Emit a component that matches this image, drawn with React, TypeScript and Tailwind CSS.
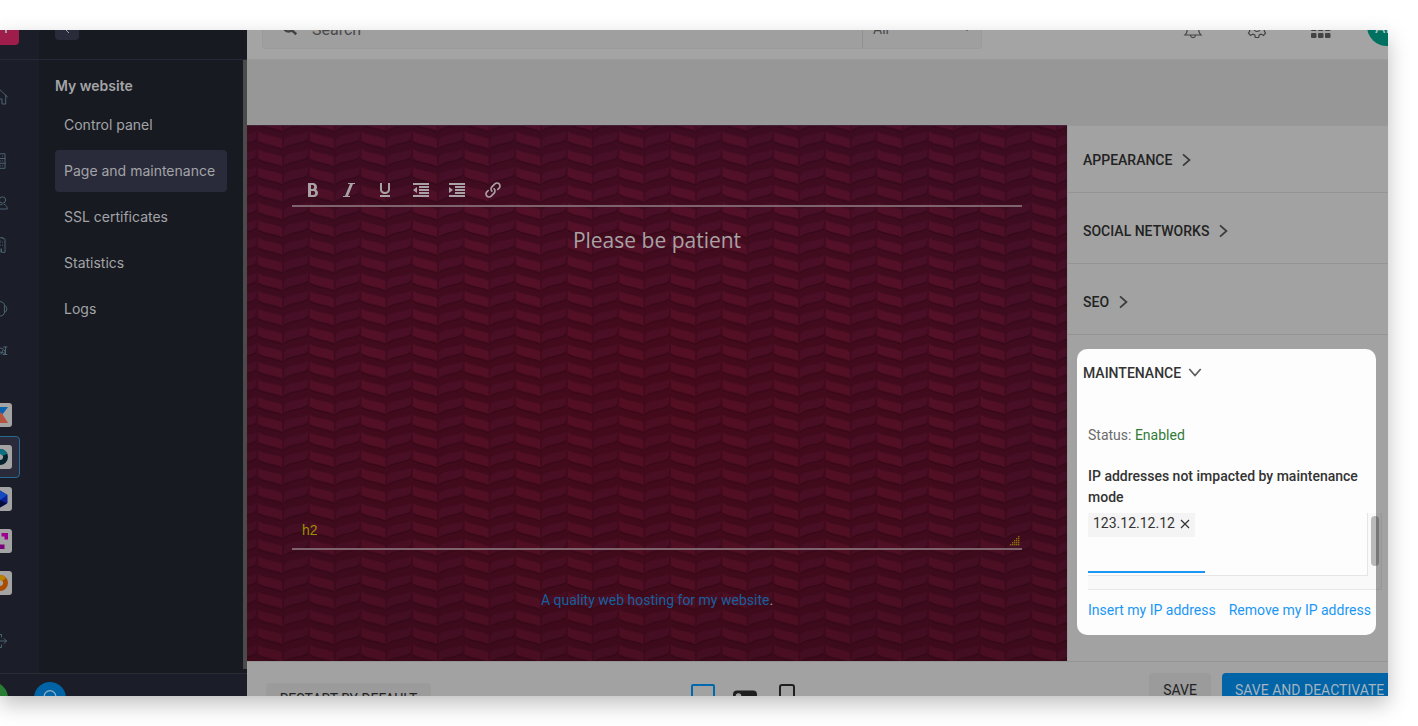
import React, { useState } from "react";
import { clsx } from "clsx";
import {
  ImBold,
  ImIndentDecrease,
  ImIndentIncrease,
  ImItalic,
  ImLink,
  ImUnderline,
} from "react-icons/im";

interface RailItem {
  name: string;
  icon: React.ReactNode;
  active?: boolean;
}

const Line: React.FC<{ children: React.ReactNode }> = ({ children }) => (
  <svg
    viewBox="0 0 16 16"
    className="size-4"
    fill="none"
    stroke="currentColor"
    strokeLinecap="round"
    strokeLinejoin="round"
  >
    {children}
  </svg>
);

const Logo: React.FC<{ children: React.ReactNode }> = ({ children }) => (
  <svg viewBox="0 0 24 24" className="size-6">
    <rect width="24" height="24" rx="3" fill="#a3a3a3" />
    {children}
  </svg>
);

const railGroups: RailItem[][] = [
  [
    {
      name: "Home",
      icon: (
        <Line>
          <path d="M.5 8 8 .8 15.500 8M2.800 6v9h3.700v-5h3.500v5h3.700V6" />
        </Line>
      ),
    },
  ],
  [
    {
      name: "Hosting",
      icon: (
        <Line>
          <path d="M3 .8h10v14.500H3zM3 5.500h10M3 10.300h10M10.500 3.200h.2M10.500 8h.2M10.500 12.800h.2M8.500 8h.2M8.500 12.800h.2" />
        </Line>
      ),
    },
    {
      name: "Users",
      icon: (
        <Line>
          <circle cx="10.500" cy="5" r="3.200" />
          <path d="M5.500 14c0-3 2-4.500 4.500-4.500M8 14h7.300c0-2.500-1.300-4-3.300-4.800" />
          <circle cx="3.500" cy="6" r="2.500" />
        </Line>
      ),
    },
    {
      name: "Company",
      icon: (
        <Line>
          <path d="M2 3.500h6M10 .8l3 1.500v13H9.500V12M8 .8h3M10.500 5v.2M10.500 8v.2M8.300 5v.2M8.300 8v.2M2 3.500v12h6V12" />
        </Line>
      ),
    },
  ],
  [
    {
      name: "Support",
      icon: (
        <Line>
          <path d="M2 5C3 2 5.500.6 8 .6S12.500 2 12.800 5M12.800 4.500c2.700.6 2.700 6.200 0 6.800zM3.200 4.500C.5 5.100.5 10.700 3.200 11.300zM12.500 11.500c-.5 2.500-2 3.500-4 3.500" />
        </Line>
      ),
    },
    {
      name: "Discover",
      icon: (
        <Line>
          <path d="M1 3.500 6 9M8 5c3 0 5 2 5.500 5.500L8 9M9 11l2-4M11.500 4H15M13.500 4v7.500M11 11.500h4" />
        </Line>
      ),
    },
  ],
  [
    {
      name: "kSuite",
      icon: (
        <Logo>
          <path d="M4 4h16l-6 8z" fill="#0b62ae" />
          <path d="M4 20 13 9l7 11z" fill="#b6553f" />
        </Logo>
      ),
    },
    {
      name: "Web hosting",
      active: true,
      icon: (
        <Logo>
          <circle cx="12" cy="12" r="5.500" fill="none" stroke="#06222d" strokeWidth="5" />
          <path d="M12 6.500a5.500 5.500 0 0 1 5 3.200" fill="none" stroke="#0b7180" strokeWidth="5" />
          <path d="m10 9 5.500 3-5.500 3z" fill="#a3a3a3" />
        </Logo>
      ),
    },
    {
      name: "Cloud",
      icon: (
        <Logo>
          <path d="M12 3.500 19.500 8v8L12 20.500 4.500 16V8z" fill="#0a2094" />
          <path d="M12 3.500 19.500 8l-7.500 5z" fill="#1549c0" />
          <path d="m12 13 7 3.500-7 4z" fill="#050b3b" />
        </Logo>
      ),
    },
    {
      name: "Streaming",
      icon: (
        <Logo>
          <path d="M13.500 4H20v6.500h-3.500v-3h-3zM4 4h6v3H7v3H4z" fill="#9b0093" />
          <path d="M8 15.500h8.500V20H8z" fill="#7c007e" />
        </Logo>
      ),
    },
    {
      name: "Events",
      icon: (
        <Logo>
          <circle cx="12" cy="12" r="5.500" fill="none" stroke="#a94d00" strokeWidth="5" />
          <path d="M12 6.500a5.500 5.500 0 0 1 4 2" fill="none" stroke="#b98300" strokeWidth="5" />
          <path d="m10 9 5.500 3-5.500 3z" fill="#a3a3a3" />
        </Logo>
      ),
    },
  ],
];

const menu = ["Control panel", "Page and maintenance", "SSL certificates", "Statistics", "Logs"];

const tools = [
  { name: "Bold", Icon: ImBold },
  { name: "Italic", Icon: ImItalic },
  { name: "Underline", Icon: ImUnderline },
  { name: "Decrease indent", Icon: ImIndentDecrease },
  { name: "Increase indent", Icon: ImIndentIncrease },
  { name: "Link", Icon: ImLink },
];

const Chevron: React.FC<{ open?: boolean }> = ({ open }) => (
  <svg
    viewBox="0 0 14 14"
    className={clsx("size-3.5 opacity-80", open && "rotate-90")}
    fill="none"
    stroke="currentColor"
    strokeWidth="1.700"
  >
    <path d="m3 1.300 6.500 5.700L3 12.700" />
  </svg>
);

const Rail: React.FC = () => (
  <div className="flex w-[39px] shrink-0 justify-end overflow-hidden bg-[#1b1d28]">
    <nav className="flex w-[78px] shrink-0 flex-col items-center gap-[22px] pt-4 text-[#4c6370]">
      {railGroups.map((group, i) => (
        <ul key={i}>
          {group.map((item) => (
            <li key={item.name}>
              <button
                aria-label={item.name}
                className={clsx(
                  "flex h-[42px] w-10 items-center justify-center",
                  item.active && "rounded border border-[#266a94] bg-[#292b3a]"
                )}
              >
                {item.icon}
              </button>
            </li>
          ))}
        </ul>
      ))}
      <button aria-label="Log out" className="-mt-1.5 flex h-[42px] w-10 items-center justify-center">
        <Line>
          <path d="M9.500 4V1.500h-8v13h8V12M5 8h9.500M12 5.500 14.500 8 12 10.500" />
        </Line>
      </button>
    </nav>
  </div>
);

const Sidebar: React.FC = () => {
  const [selected, setSelected] = useState<string>("Page and maintenance");

  return (
    <aside className="flex w-[247px] shrink-0 flex-col bg-[#171a21] font-['Inter','Liberation_Sans',sans-serif] text-[#a3a4a7]">
      <div className="flex h-[30px] items-end overflow-hidden border-b border-[#252938]">
        <div className="flex h-full w-[39px] shrink-0 items-start bg-[#1b1d28]">
          <span className="flex h-[15px] w-[19px] items-end justify-center rounded-br bg-[#9e1d4b]">
            <span className="mr-2 mb-3 h-1 w-0.5 bg-[#a3a4a7]" />
          </span>
        </div>
        <button
          aria-label="Back"
          className="mb-[19px] ml-4 flex h-6 w-6 shrink-0 items-center justify-center rounded bg-[#292b3a]"
        >
          <svg viewBox="0 0 12 12" className="size-3" fill="none" stroke="currentColor">
            <path d="M8 1 3 6l5 5" />
          </svg>
        </button>
      </div>
      <div className="flex flex-1">
        <Rail />
        <div className="flex-1 px-4 pt-4">
          <h2 className="text-sm font-semibold">My website</h2>
          <ul className="mt-2 space-y-1">
            {menu.map((item) => (
              <li key={item}>
                <button
                  onClick={() => setSelected(item)}
                  className={clsx(
                    "h-[42px] w-full rounded px-[9px] text-left text-sm",
                    item === selected && "bg-[#292b3a]"
                  )}
                >
                  {item}
                </button>
              </li>
            ))}
          </ul>
        </div>
        <div className="mb-1 w-1 bg-[#4b4b4b]" />
      </div>
      <div className="flex h-[23px] items-start gap-[26px] overflow-hidden border-t border-[#2a2b33] bg-[#1b1d28] pt-2">
        <span className="-ml-6 size-8 shrink-0 rounded-full bg-[#287c33]" />
        <button
          aria-label="Search"
          className="flex size-8 shrink-0 justify-center rounded-full bg-[#0063a6] pt-2"
        >
          <svg viewBox="0 0 16 16" className="size-4" fill="none" stroke="#8eafc6" strokeWidth="1.300">
            <circle cx="8" cy="6.500" r="5.800" />
          </svg>
        </button>
      </div>
    </aside>
  );
};

const Header: React.FC = () => (
  <header className="flex h-[30px] items-end overflow-hidden border-b border-[#9b9b9b] bg-[#a4a4a4] pl-[15px] text-[#434343]">
    <div className="mb-2.5 flex h-10 w-[720px] shrink items-center rounded border border-[#9a9a9a] bg-[#9f9f9f]">
      <svg viewBox="0 0 16 16" className="ml-[19px] size-4 shrink-0" fill="none" stroke="currentColor" strokeWidth="2.500">
        <circle cx="6.500" cy="6" r="4.500" />
        <path d="m9.800 9.300 4.500 4" />
      </svg>
      <input
        aria-label="Search"
        placeholder="Search"
        className="ml-3.5 h-full min-w-0 flex-1 bg-transparent text-base outline-none placeholder:text-[#4a4a4a]"
      />
      <div className="flex h-full w-[119px] items-center border-l border-[#919191] pr-2.5">
        <select
          aria-label="Category"
          className="h-full min-w-0 flex-1 appearance-none bg-transparent pl-2.5 text-sm text-[#4a4a4a]"
        >
          <option>All</option>
        </select>
        <svg viewBox="0 0 8 8" className="size-2" fill="currentColor">
          <path d="M0 2h8L4 6z" />
        </svg>
      </div>
    </div>
    <div className="ml-auto flex shrink-0 items-end">
      <svg viewBox="0 0 20 20" className="mb-5 size-5" fill="none" stroke="currentColor" strokeWidth="1.200">
        <path d="M2 16h16c-2-2-2.500-3-2.500-7S13 2.500 10 2.500 4.500 5 4.500 9 4 14 2 16zM7.500 16.500c.5 2.800 4.500 2.800 5 0" />
      </svg>
      <svg viewBox="0 0 20 20" className="mb-5 ml-11 size-5" fill="none" stroke="currentColor" strokeWidth="1.200">
        <circle cx="10" cy="9.500" r="3" />
        <path d="M8.300 18.500 7.800 16l-2 -.9-2.300 1.300-2-2.300 1.300-2.300-.8-2L.5 9V6l2.300-.6 1-2L8 .5h4l4.200 2.900 1 2 2.300.6v3l-1.500.8-.8 2 1.300 2.300-2 2.300-2.300-1.300-2 .9-.5 2.500z" />
      </svg>
      <svg viewBox="0 0 20 20" className="mb-5 ml-11 size-5" fill="currentColor">
        {[0, 7, 14].map((x) =>
          [0, 7, 14].map((y) => <rect key={`${x}-${y}`} x={x} y={y} width="5.500" height="5" rx="1" />)
        )}
      </svg>
      <div className="ml-9 w-[21px]">
        <div className="mb-[13px] flex size-10 items-center rounded-full bg-[#007161] pt-1 pl-2 text-base text-[#b5c9c5]">
          AF
        </div>
      </div>
    </div>
  </header>
);

const Weave: React.FC = () => (
  <svg className="absolute inset-0 h-full w-full" aria-hidden="true">
    <defs>
      <pattern
        id="weave"
        width="51.600"
        height="17.700"
        patternUnits="userSpaceOnUse"
        patternTransform="translate(10.300 -13)"
      >
        <rect width="51.600" height="17.700" fill="#420c1e" />
        {[-17.7, 0].map((y) => (
          <g key={y} transform={`translate(0 ${y})`}>
            <path
              d="M.5 10.800c6 4.500 18 4.500 24.800 8.500M26.500 18.500c5-6 18-4.500 24.500-9"
              stroke="#360817"
              strokeWidth="1.600"
              fill="none"
            />
            <path d="M.8.500c5 4.500 16 4 24.200 8v9.300C18 14 7 14 .8 10z" fill="#591229" />
            <path d="M27 9c4-6 17-4 24-8.500-1 4 0 6-2 8.500-6 4-17 3-22.500 8.500z" fill="#4d1129" />
          </g>
        ))}
        <path d="M25.800 0v18M.1 0v18" stroke="#3f0a1c" strokeWidth=".8" />
      </pattern>
      <linearGradient id="shade" x2="0" y2="1">
        <stop offset="0" stopColor="#400c30" stopOpacity=".14" />
        <stop offset=".45" stopColor="#40081a" stopOpacity=".14" />
        <stop offset="1" stopColor="#3a0610" stopOpacity=".28" />
      </linearGradient>
      <radialGradient id="edges">
        <stop offset=".1" stopColor="#4c0612" stopOpacity=".2" />
        <stop offset=".75" stopColor="#400a1e" stopOpacity=".1" />
        <stop offset="1" stopColor="#2c0a20" stopOpacity=".18" />
      </radialGradient>
    </defs>
    <rect width="100%" height="100%" fill="url(#weave)" />
    <rect width="100%" height="100%" fill="url(#shade)" />
    <rect width="100%" height="100%" fill="url(#edges)" />
  </svg>
);

const Editor: React.FC = () => (
  <section className="relative min-w-0 flex-1 border-t border-[#45213a]">
    <Weave />
    <div className="relative flex h-full flex-col px-[45px] pt-12 text-[#a9a2a4]">
      <div className="flex h-[33px] border-b-2 border-[#7f636c] pl-[3px]">
        {tools.map(({ name, Icon }) => (
          <button key={name} aria-label={name} className="flex h-8 w-9 items-center justify-center">
            <Icon className="size-4" />
          </button>
        ))}
      </div>
      <div className="flex h-[343px] flex-col justify-between border-b-2 border-[#7f636c] pt-[17px]">
        <h2 className="text-center font-['Open_Sans','Noto_Sans',sans-serif] text-[21px] leading-8 font-medium">
          Please be patient
        </h2>
        <div className="flex items-end justify-between pr-0.5 pb-0.5 pl-2.5 text-sm text-[#9c9100]">
          <span className="mb-1.5 font-['Liberation_Sans',sans-serif]">h2</span>
          <svg viewBox="0 0 10 10" className="size-2.5" fill="#8a6a08">
            {[0, 2, 4, 6, 8].map((x) =>
              [0, 2, 4, 6, 8]
                .filter((y) => x + y >= 8)
                .map((y) => <rect key={`${x}-${y}`} x={x} y={y} width="1.400" height="1.400" />)
            )}
          </svg>
        </div>
      </div>
      <p className="mt-10 text-center text-sm">
        <a href="#" className="text-[#15609f]">
          A quality web hosting for my website
        </a>
        .
      </p>
    </div>
  </section>
);

const MaintenanceCard: React.FC = () => {
  const [ips, setIps] = useState<string[]>(["123.12.12.12"]);

  return (
    <div className="mt-3.5 mr-3 ml-[9px] rounded-[10px] bg-[#fdfdfd] pb-[15px] text-sm text-[#333]">
      <button className="flex items-center gap-[7px] pt-3.5 pl-1.5 font-medium">
        MAINTENANCE <Chevron open />
      </button>
      <div className="mt-[42px] ml-[11px]">
        <p className="text-[#6b6b6b]">
          Status: <span className="text-[#317a38]">Enabled</span>
        </p>
        <label htmlFor="ip" className="mt-[21px] block pr-3 leading-[21px] font-medium">
          IP addresses not impacted by maintenance mode
        </label>
        <div className="relative mt-[5px] h-[77px] border-b border-[#e8e8e8] bg-[#f9f9f9]">
          <div className="mr-2 flex h-[63px] flex-col items-start justify-between border-r border-b border-[#e5e5e5] bg-[#fdfdfd]">
            <div className="flex gap-1">
              {ips.map((ip) => (
                <span key={ip} className="flex h-6 items-center gap-[5px] bg-[#f4f4f4] px-[5px] pb-1">
                  {ip}
                  <button aria-label="Remove" onClick={() => setIps(ips.filter((i) => i !== ip))}>
                    <svg viewBox="0 0 10 10" className="mt-0.5 size-2.5" stroke="currentColor" strokeWidth="1.200">
                      <path d="m1 1 8 8M9 1 1 9" />
                    </svg>
                  </button>
                </span>
              ))}
            </div>
            <input
              id="ip"
              className="mb-0.5 h-6 w-[117px] border-b-2 border-[#1a97f5] bg-transparent outline-none"
            />
          </div>
          <div className="absolute top-0 left-full h-[77px] w-1.5 border-r border-b border-[#979797] bg-[#9f9f9f]" />
          <div className="absolute top-[3px] -right-[3px] flex h-[50px] w-2 overflow-hidden rounded-full">
            <div className="w-[5px] bg-[#b9b9b9]" />
            <div className="flex-1 bg-[#777]" />
          </div>
        </div>
        <div className="mt-2.5 flex gap-[13px] whitespace-nowrap text-[#1a97f5]">
          <button onClick={() => setIps(["123.12.12.12"])}>Insert my IP address</button>
          <button onClick={() => setIps([])}>Remove my IP address</button>
        </div>
      </div>
    </div>
  );
};

const Settings: React.FC = () => (
  <section className="w-[321px] shrink-0 border-t border-l border-[#999] bg-[#a2a2a2] text-sm text-[#222]">
    {["APPEARANCE", "SOCIAL NETWORKS", "SEO"].map((title) => (
      <div key={title} className="border-b border-[#949494] pt-7 pb-[22px] first:pt-6">
        <button className="flex items-center gap-2 pl-[15px] font-medium">
          {title} <Chevron />
        </button>
      </div>
    ))}
    <MaintenanceCard />
  </section>
);

const Footer: React.FC = () => (
  <footer className="flex h-[35px] items-start overflow-hidden border-t border-[#949494] bg-[#a2a2a2] pl-[19px] text-sm text-[#222]">
    <div className="flex flex-1">
      <button className="mt-[21px] h-8 w-[165px] shrink-0 rounded-sm bg-[#9b9b9b] text-center">
        RESTART BY DEFAULT
      </button>
    </div>
    <div className="mt-[22px] flex gap-[18px]">
      <button aria-label="Desktop">
        <svg viewBox="0 0 24 24" className="size-6" fill="none" stroke="#0068ac" strokeWidth="2">
          <rect x="1" y="1" width="22" height="18" rx="1" />
        </svg>
      </button>
      <button aria-label="Tablet">
        <svg viewBox="0 0 24 24" className="size-6">
          <rect y="6.500" width="24" height="15" rx="4" fill="#1f1f1f" />
          <circle cx="5.500" cy="12" r="2.800" fill="#a2a2a2" />
        </svg>
      </button>
      <button aria-label="Phone">
        <svg viewBox="0 0 24 24" className="size-6" fill="none" stroke="#1f1f1f" strokeWidth="2">
          <rect x="5" y="1" width="14" height="22" rx="2" />
        </svg>
      </button>
    </div>
    <div className="mt-[11px] flex flex-1 justify-end gap-[11px] pl-41">
      <button className="h-[34px] w-[62px] shrink-0 rounded-sm bg-[#9b9b9b]">SAVE</button>
      <button className="h-[34px] w-[166px] shrink-0 rounded-l-sm bg-[#0064a7] pl-[13px] text-left whitespace-nowrap text-[#a4b4c0]">
        SAVE AND DEACTIVATE
      </button>
    </div>
  </footer>
);

export default function App() {
  return (
    <div className="flex min-h-screen bg-white py-[30px] pr-[30px] font-['Roboto',sans-serif]">
      <div className="flex min-w-0 flex-1 overflow-hidden shadow-[0_8px_20px_rgba(0,0,0,0.25)]">
        <Sidebar />
        <main className="flex min-w-0 flex-1 flex-col">
          <Header />
          <div className="h-[65px] bg-[#979797]" />
          <div className="flex flex-1">
            <Editor />
            <Settings />
          </div>
          <Footer />
        </main>
      </div>
    </div>
  );
}
